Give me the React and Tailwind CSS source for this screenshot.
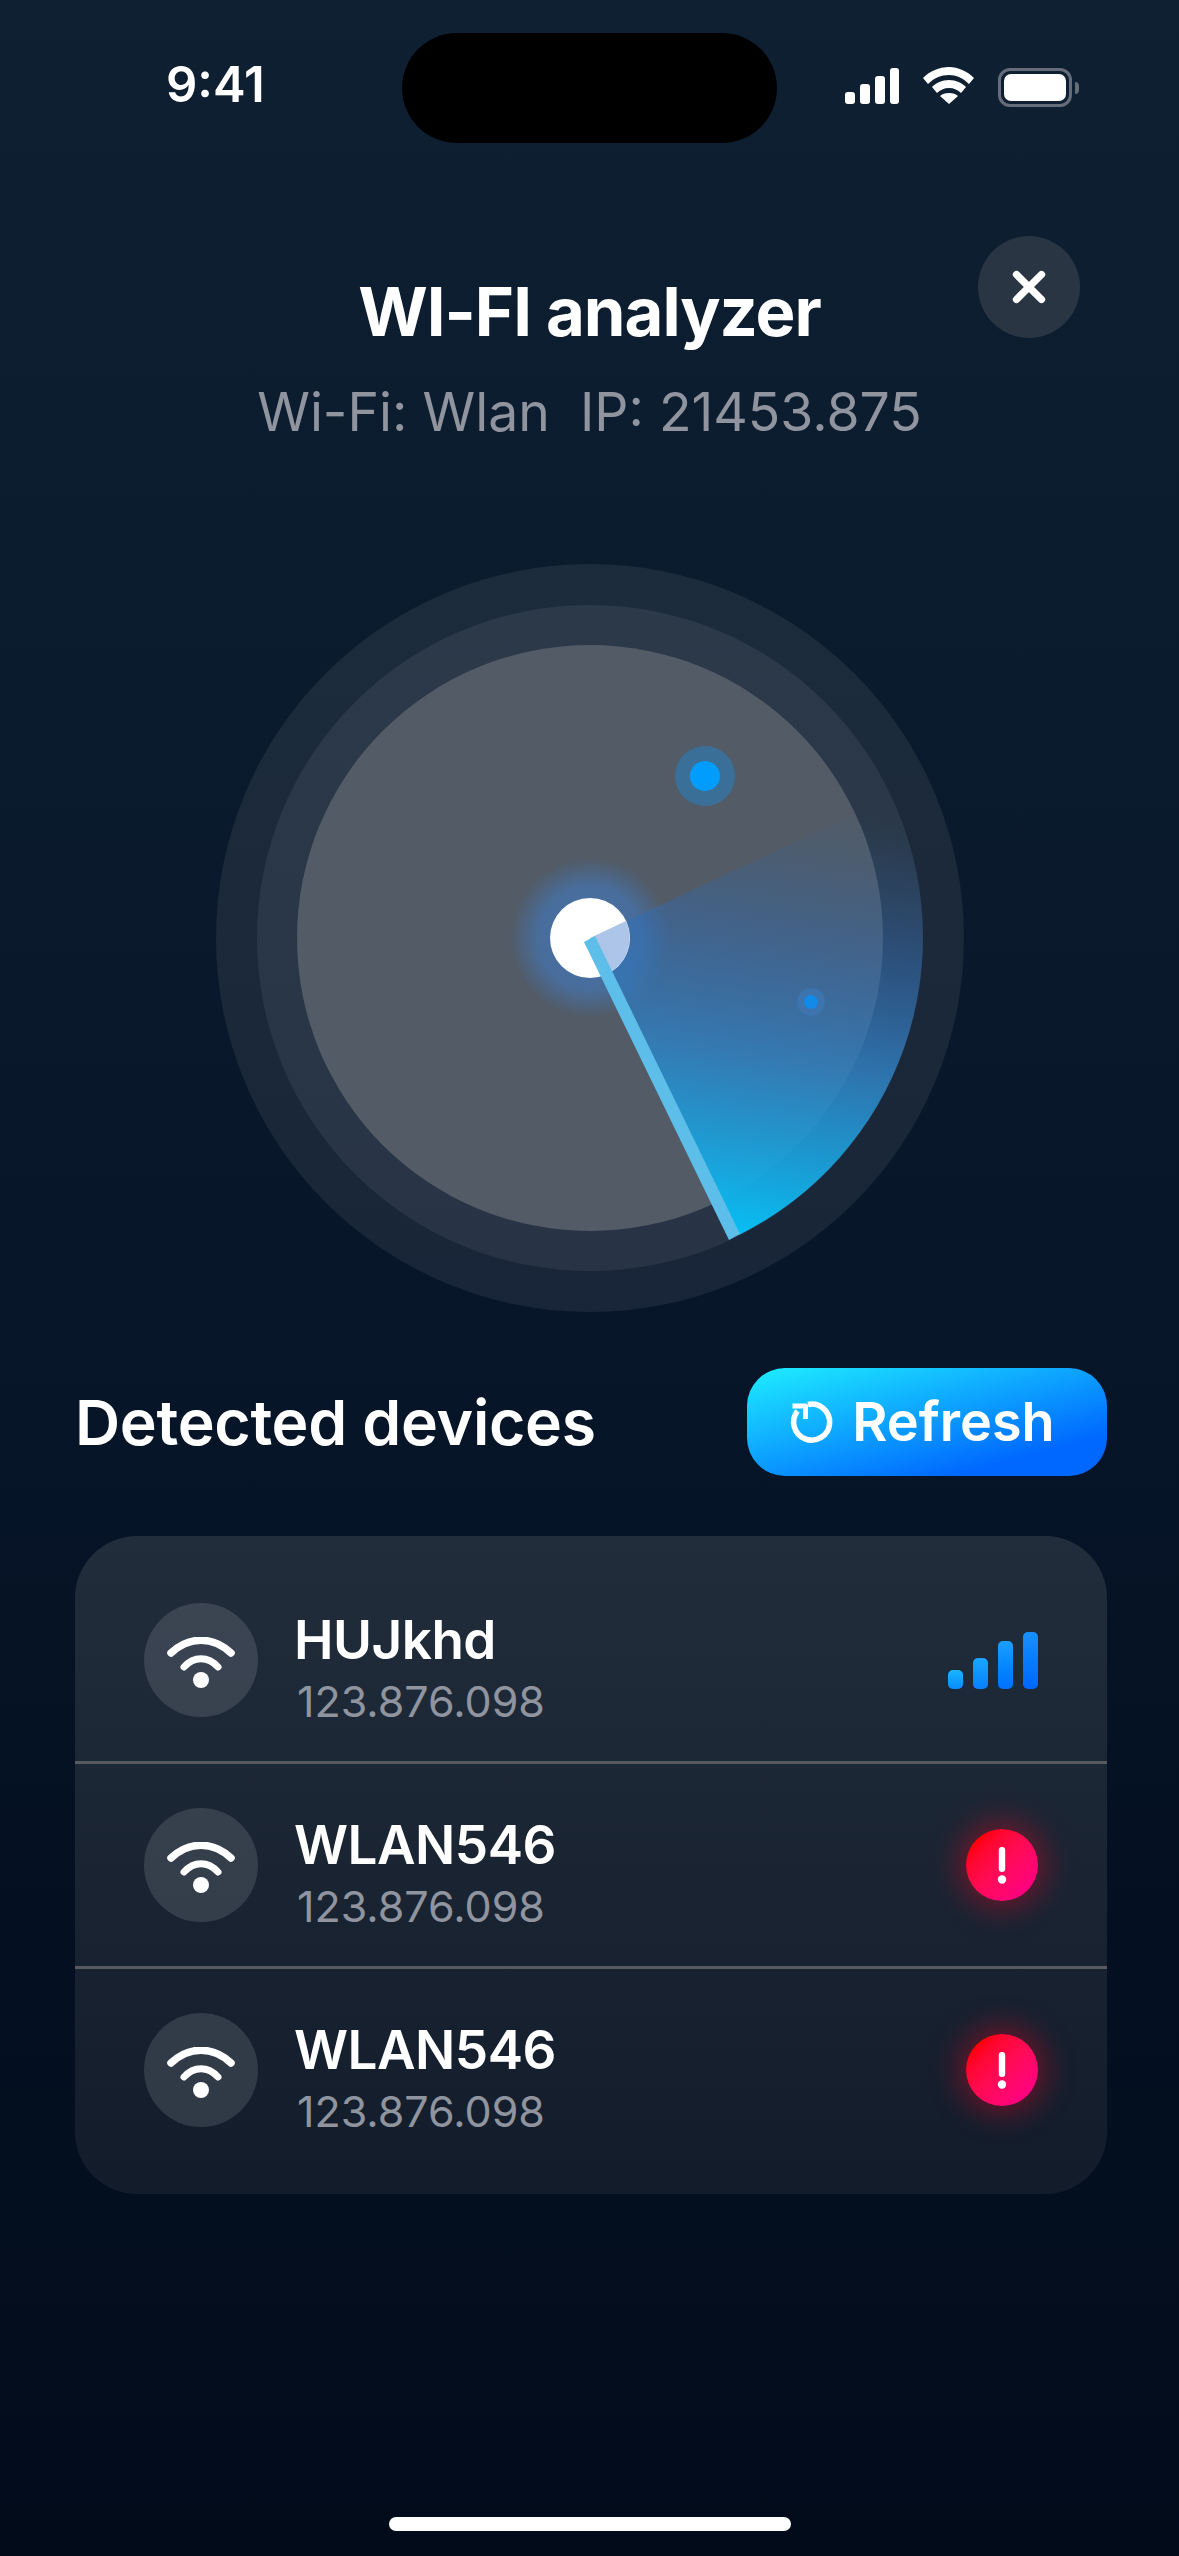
import { X } from 'lucide-react'

const FONT = "font-['Inter',sans-serif]"

function WifiGlyph({ className }) {
  return (
    <svg viewBox="0 0 68 52" className={className} fill="none" stroke="#fff" strokeLinecap="round">
      <path d="M4 16C22 -1 46 -1 64 16" strokeWidth="7.500" />
      <path d="M17 30C27 19 41 19 51 30" strokeWidth="7" />
      <circle cx="34" cy="43" r="8" fill="#fff" stroke="none" />
    </svg>
  )
}

function RefreshGlyph() {
  return (
    <svg viewBox="0 0 42 42" className="h-[42px] w-[42px] overflow-visible" fill="none" stroke="#fff" strokeWidth="5.500">
      <path d="M16 3.500A18 18 0 1 1 5.500 10" />
      <path d="M0.500 5H13.500V18" strokeLinejoin="round" strokeWidth="5" />
    </svg>
  )
}

function StatusBar() {
  return (
    <div className="relative flex h-[143px] items-start justify-between pl-[166px] pr-[100px] pt-[58px]">
      <span className="text-[49px] font-semibold leading-[54px] text-white">9:41</span>
      <div className="absolute left-[402px] top-[33px] h-[110px] w-[375px] rounded-[55px] bg-black" />
      <div className="flex items-start gap-[24px] pt-[10px]">
        <svg viewBox="0 0 54 36" className="h-[36px] w-[54px]" fill="#fff">
          <rect x="0" y="24" width="10" height="12" rx="3" />
          <rect x="15" y="16" width="10" height="20" rx="3" />
          <rect x="30" y="8" width="10" height="28" rx="3" />
          <rect x="45" y="0" width="9" height="36" rx="3" />
        </svg>
        <svg viewBox="0 0 51 37" className="-mt-[1px] h-[37px] w-[51px]" fill="#fff">
          <path d="M26 0C16 0 7 4 0 11L5 17C11 11 18 8 26 8C33 8 40 11 46 17L51 11C44 4 35 0 26 0Z" />
          <path d="M26 13C19 13 13 16 9 20L14 26C17 23 21 21 26 21C31 21 35 23 38 26L43 20C39 16 33 13 26 13Z" />
          <path d="M26 26C22 26 19 27 17 29L26 37L35 29C33 27 30 26 26 26Z" />
        </svg>
        <div className="flex items-center">
          <div className="h-[39px] w-[74px] rounded-[12px] border-[3px] border-[#646d79] p-[3px]">
            <div className="h-full w-full rounded-[7px] bg-white" />
          </div>
          <div className="ml-[3px] h-[12px] w-[4px] rounded-r-full bg-[#646d79]" />
        </div>
      </div>
    </div>
  )
}

function Radar() {
  const cx = 375
  const cy = 375
  return (
    <svg viewBox="0 0 750 750" className="h-[750px] w-[750px]">
      <defs>
        <linearGradient id="sweep" gradientUnits="userSpaceOnUse" x1="520" y1="680" x2="590" y2="240">
          <stop offset="0" stopColor="#05c3f8" />
          <stop offset="0.42" stopColor="#2f7fc0" stopOpacity="0.85" />
          <stop offset="0.7" stopColor="#2f6cb5" stopOpacity="0.45" />
          <stop offset="1" stopColor="#31659e" stopOpacity="0" />
        </linearGradient>
        <radialGradient id="glow">
          <stop offset="0" stopColor="#3f7fd0" stopOpacity="0.65" />
          <stop offset="0.65" stopColor="#3f7fd0" stopOpacity="0.5" />
          <stop offset="1" stopColor="#3f7fd0" stopOpacity="0" />
        </radialGradient>
      </defs>
      <circle cx={cx} cy={cy} r="374" fill="#fff" fillOpacity="0.07" />
      <circle cx={cx} cy={cy} r="333" fill="#fff" fillOpacity="0.065" />
      <circle cx={cx} cy={cy} r="293" fill="#525b66" />
      <circle cx={cx} cy={cy} r="80" fill="url(#glow)" />
      <circle cx="490" cy="213" r="30" fill="#3a6f98" />
      <circle cx="490" cy="213" r="15" fill="#009dff" />
      <path d="M375 375 L677 234 A333 333 0 0 1 524 672 Z" fill="url(#sweep)" />
      <circle cx="596" cy="439" r="14" fill="#3d74ad" />
      <circle cx="596" cy="439" r="7" fill="#118ae8" />
      <circle cx={cx} cy={cy} r="40" fill="#fff" />
      <path d="M375 375 L411 358 A40 40 0 0 1 392 411 Z" fill="#adc5e8" />
      <path d="M369 379 L380 373 L525 671 L514 677 Z" fill="#5dbfe9" />
    </svg>
  )
}

function DeviceRow({ name, children }) {
  return (
    <div className="flex items-center py-[44px] pl-[69px] pr-[69px]">
      <div className="flex h-[114px] w-[114px] items-center justify-center rounded-full bg-white/12">
        <WifiGlyph className="mt-[6px] h-[52px] w-[68px]" />
      </div>
      <div className="ml-[36px] flex h-[114px] flex-1 flex-col">
        <span className="mt-[12px] text-[53px] font-semibold leading-[50px] tracking-[-0.5px] text-white">{name}</span>
        <span className="ml-[3px] mt-[20px] text-[43px] leading-[32px] text-[#8f949e]">123.876.098</span>
      </div>
      {children}
    </div>
  )
}

function Alert() {
  return (
    <div className="flex h-[72px] w-[72px] items-center justify-center rounded-full bg-gradient-to-br from-[#ff0000] from-15% to-[#ff0080] to-85% shadow-[0_0_30px_8px_rgba(255,0,30,0.36)]">
      <svg viewBox="0 0 12 37" className="h-[37px] w-[12px]">
        <rect x="2.800" y="0" width="6.400" height="25" rx="3.200" fill="#fff" />
        <circle cx="6" cy="32.500" r="4.200" fill="#fff" />
      </svg>
    </div>
  )
}

function SignalBars() {
  return (
    <div className="flex items-end gap-[10px]">
      <div className="h-[19px] w-[15px] rounded-[5px] bg-gradient-to-b from-[#1bb5ff] to-[#0a8cff]" />
      <div className="h-[31px] w-[15px] rounded-[5px] bg-gradient-to-b from-[#1aa6ff] to-[#0a80ff]" />
      <div className="h-[48px] w-[15px] rounded-[5px] bg-gradient-to-b from-[#1a9fff] to-[#0070ff]" />
      <div className="h-[57px] w-[15px] rounded-[5px] bg-gradient-to-b from-[#1a90ff] to-[#0066ff]" />
    </div>
  )
}

export default function App() {
  return (
    <div className={`${FONT} flex h-[2556px] w-[1179px] flex-col overflow-hidden bg-gradient-to-b from-[#0f2032] via-[#08162a] to-[#020b1a]`}>
      <StatusBar />

      <div className="relative mt-[130px] flex flex-col items-center">
        <h1 className="text-[67px] font-bold leading-[78px] tracking-[-1px] text-white">WI-FI analyzer</h1>
        <p className="mt-[30px] text-[53.500px] leading-[62px] text-[#8f949e]">Wi-Fi: Wlan&nbsp; IP: 21453.875</p>
        <button className="absolute right-[99px] top-[-37px] flex h-[102px] w-[102px] items-center justify-center rounded-full bg-[#2a3544]">
          <X size={50} color="#fff" strokeWidth={3.5} />
        </button>
      </div>

      <div className="mt-[120px] flex justify-center">
        <Radar />
      </div>

      <div className="ml-[75px] mr-[72px] mt-[55px] flex items-center justify-between">
        <h2 className="text-[62.500px] font-semibold leading-[72px] tracking-[-0.3px] text-white">Detected devices</h2>
        <button className="flex h-[108px] w-[360px] items-center justify-center gap-[18px] rounded-[38px] bg-[linear-gradient(165deg,#1ce6ff_5%,#0068ff_80%)] pr-[7px]">
          <RefreshGlyph />
          <span className="text-[54px] font-semibold leading-none text-white">Refresh</span>
        </button>
      </div>

      <div className="ml-[75px] mr-[72px] mt-[60px] flex flex-col rounded-[62px] bg-gradient-to-b from-[#222d3c] to-[#121c2b] py-[23px]">
        <DeviceRow name="HUJkhd"><SignalBars /></DeviceRow>
        <div className="h-[3px] bg-[#56595e]" />
        <DeviceRow name="WLAN546"><Alert /></DeviceRow>
        <div className="h-[3px] bg-[#56595e]" />
        <DeviceRow name="WLAN546"><Alert /></DeviceRow>
      </div>

      <div className="mb-[25px] mt-auto flex justify-center">
        <div className="h-[14px] w-[402px] rounded-full bg-white" />
      </div>
    </div>
  )
}
